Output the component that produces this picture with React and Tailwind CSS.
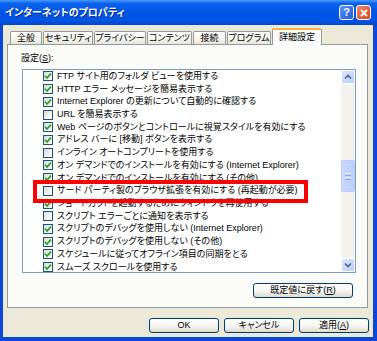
import React from 'react';

const jp = "[font-family:'Liberation_Sans','Noto_Sans_CJK_JP',sans-serif] [font-feature-settings:'palt']";

const tabs = [
  { label: '全般', w: 'w-[32px]' },
  { label: 'セキュリティ', w: 'w-[50px]' },
  { label: 'プライバシー', w: 'w-[52px]' },
  { label: 'コンテンツ', w: 'w-[45px]' },
  { label: '接続', w: 'w-[33px]' },
  { label: 'プログラム', w: 'w-[44px]' },
];

const rows = [
  { label: 'FTP サイト用のフォルダ ビューを使用する', on: true },
  { label: 'HTTP エラー メッセージを簡易表示する', on: true },
  { label: 'Internet Explorer の更新について自動的に確認する', on: true },
  { label: 'URL を簡易表示する', on: false },
  { label: 'Web ページのボタンとコントロールに視覚スタイルを有効にする', on: true },
  { label: 'アドレス バーに [移動] ボタンを表示する', on: true },
  { label: 'インライン オートコンプリートを使用する', on: false },
  { label: 'オン デマンドでのインストールを有効にする (Internet Explorer)', on: true },
  { label: 'オン デマンドでのインストールを有効にする (その他)', on: true },
  { label: 'サード パーティ製のブラウザ拡張を有効にする (再起動が必要)', on: false },
  { label: 'ショートカットを起動するためにウィンドウを再使用する', on: true },
  { label: 'スクリプト エラーごとに通知を表示する', on: false },
  { label: 'スクリプトのデバッグを使用しない (Internet Explorer)', on: true },
  { label: 'スクリプトのデバッグを使用しない (その他)', on: true },
  { label: 'スケジュールに従ってオフライン項目の同期をとる', on: true },
  { label: 'スムーズ スクロールを使用する', on: true },
];

const Check = ({ on }) => (
  <span className="w-[10px] h-[10px] shrink-0 border border-[#1c5180] bg-[linear-gradient(135deg,#d8d8d2,#f4f4f0_60%,#ffffff)] flex items-center justify-center">
    {on && (
      <svg width="8" height="8" viewBox="0 0 8 8">
        <polyline points="1,3.8 3,6 7,1.6" fill="none" stroke="#21a121" strokeWidth="1.7" />
      </svg>
    )}
  </span>
);

const XpButton = ({ children, className }) => (
  <div className={`h-[15px] rounded-[3px] border border-[#003c74] bg-[linear-gradient(to_bottom,#ffffff,#f3f3ee_60%,#dcd8cc)] flex items-center justify-center text-[9px] leading-none text-black whitespace-nowrap ${className}`}>
    {children}
  </div>
);

const Arrow = ({ up }) => (
  <div className="h-[14px] rounded-[2px] border border-[#ffffff] bg-[linear-gradient(135deg,#dbe6fd,#b9cdf8)] flex items-center justify-center">
    <svg width="8" height="6" viewBox="0 0 8 6">
      <polyline points={up ? '1,4.5 4,1.5 7,4.5' : '1,1.5 4,4.5 7,1.5'} fill="none" stroke="#4d6185" strokeWidth="1.6" />
    </svg>
  </div>
);

export default function App() {
  return (
    <div className={`relative w-[377px] h-[341px] overflow-hidden bg-[#0b48d8] flex flex-col ${jp}`}>
      {/* title bar */}
      <div className="h-[25px] shrink-0 flex items-center pl-[5px] pr-[6px] bg-[linear-gradient(to_bottom,#4a98ff_0%,#0a62ee_14%,#0056e8_50%,#0052e2_85%,#0046d2_100%)]">
        <span className="text-white font-bold text-[10px] leading-none [text-shadow:1px_1px_0_#0a2a8a]">インターネットのプロパティ</span>
        <div className="ml-auto flex gap-[2px]">
          <div className="w-[15px] h-[15px] rounded-[3px] border border-white bg-[linear-gradient(135deg,#5b92f6,#2259e0)] flex items-center justify-center text-white font-bold text-[11px] leading-none">?</div>
          <div className="w-[15px] h-[15px] rounded-[3px] border border-white bg-[linear-gradient(135deg,#f08a6a,#d6411a)] flex items-center justify-center">
            <svg width="8" height="8" viewBox="0 0 8 8">
              <path d="M1 1L7 7M7 1L1 7" stroke="#ffffff" strokeWidth="1.8" />
            </svg>
          </div>
        </div>
      </div>

      {/* body */}
      <div className="flex-1 pl-[3px] pr-[4px] pb-[4px] flex">
        <div className="flex-1 bg-[#ece9d8] pl-[4px] pt-[3px] flex flex-col">
          {/* tabs */}
          <div className="h-[16px] flex items-end gap-[1px] pl-[3px]">
            {tabs.map((t) => (
              <div
                key={t.label}
                className={`${t.w} h-[13px] border border-b-0 border-[#919b9c] rounded-t-[2px] bg-[linear-gradient(to_bottom,#ffffff,#f4f3ee_60%,#e8e6dc)] flex items-center justify-center text-[9px] leading-none whitespace-nowrap`}
              >
                {t.label}
              </div>
            ))}
            <div className="w-[50px] h-[17px] -mb-[1px] relative z-10 border-x border-[#919b9c] border-t-[2px] border-t-[#f9b43c] rounded-t-[2px] bg-[#fcfcfe] flex items-center justify-center text-[9px] leading-none whitespace-nowrap">
              詳細設定
            </div>
          </div>

          {/* panel */}
          <div className="w-[361px] h-[264px] border border-[#919b9c] bg-[#fbfbf9] pt-[7px] pl-[13px] flex flex-col">
            <div className="text-[9px] leading-[12px]">
              設定(<span className="underline">S</span>):
            </div>
            <div className="mt-[5px] ml-[1px] w-[334px] h-[204px] border border-[#7f9db9] bg-white flex">
              <div className="flex-1 overflow-hidden">
                {rows.map((r) => (
                  <div key={r.label} className="h-[12.73px] flex items-center gap-[4px] pl-[20px] text-[9px] leading-none whitespace-nowrap">
                    <Check on={r.on} />
                    <span>{r.label}</span>
                  </div>
                ))}
              </div>
              <div className="w-[14px] bg-[#f4f2ec] flex flex-col">
                <Arrow up />
                <div className="flex-1 relative">
                  <div className="absolute left-0 right-0 top-[76px] h-[32px] rounded-[2px] border border-[#b7cbf6] bg-[linear-gradient(to_right,#cbdafc,#bccff9)] flex flex-col items-center justify-center gap-[1px]">
                    <div className="w-[6px] h-[1px] bg-[#eef3fe]" />
                    <div className="w-[6px] h-[1px] bg-[#8caaf0]" />
                    <div className="w-[6px] h-[1px] bg-[#eef3fe]" />
                    <div className="w-[6px] h-[1px] bg-[#8caaf0]" />
                  </div>
                </div>
                <Arrow />
              </div>
            </div>
            <div className="mt-[10px] flex justify-end mr-[14px]">
              <XpButton className="w-[100px]">
                既定値に戻す(<span className="underline">R</span>)
              </XpButton>
            </div>
          </div>

          {/* dialog buttons */}
          <div className="mt-[10px] flex justify-end gap-[5px] pr-[4px]">
            <XpButton className="w-[70px]">OK</XpButton>
            <XpButton className="w-[70px]">キャンセル</XpButton>
            <XpButton className="w-[70px]">
              適用(<span className="underline">A</span>)
            </XpButton>
          </div>
        </div>
      </div>

      {/* red highlight */}
      <div className="absolute left-[33px] top-[180px] w-[275px] h-[23px] border-[4px] border-[#ff0000]" />
    </div>
  );
}
